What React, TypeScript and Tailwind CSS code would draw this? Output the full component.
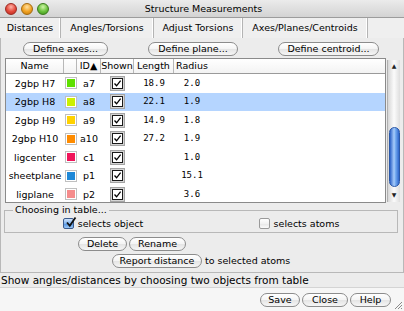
import React from 'react';

const rows = [
  { name: '2gbp H7', color: '#5fe000', id: 'a7', length: '18.9', radius: '2.0' },
  { name: '2gbp H8', color: '#ccf000', id: 'a8', length: '22.1', radius: '1.9', selected: true },
  { name: '2gbp H9', color: '#ffd200', id: 'a9', length: '14.9', radius: '1.8' },
  { name: '2gbp H10', color: '#ff8c00', id: 'a10', length: '27.2', radius: '1.9' },
  { name: 'ligcenter', color: '#f0145a', id: 'c1', length: '', radius: '1.0' },
  { name: 'sheetplane', color: '#1e88d8', id: 'p1', length: '', radius: '15.1' },
  { name: 'ligplane', color: '#f58c8c', id: 'p2', length: '', radius: '3.6' },
];

const tabs = [
  { label: 'Distances', w: 'w-[61px]' },
  { label: 'Angles/Torsions', w: 'w-[93px]' },
  { label: 'Adjust Torsions', w: 'w-[89px]' },
  { label: 'Axes/Planes/Centroids', w: 'w-[125px]' },
];

function Pill({ label, w }: { label: string; w: string }) {
  return (
    <div
      className={`${w} h-[14px] rounded-full border border-[#8c8c8c] bg-[linear-gradient(to_bottom,#ffffff,#f4f4f4_50%,#e4e4e4_51%,#f6f6f6)] flex items-center justify-center text-[9.5px] leading-none text-black shrink-0`}
    >
      {label}
    </div>
  );
}

function TableCheck() {
  return (
    <div className="w-[15px] h-[15px] bg-[#d4d4d4] border border-[#a4a4a4] flex items-center justify-center">
      <div className="w-[11px] h-[11px] bg-white border border-[#1a1a1a] flex items-center justify-center">
        <svg width="9" height="9" viewBox="0 0 9 9">
          <path d="M1.5 4.5 L3.6 6.8 L7.6 1.6" fill="none" stroke="#000" strokeWidth="1.3" />
        </svg>
      </div>
    </div>
  );
}

function AquaCheck({ checked }: { checked: boolean }) {
  return checked ? (
    <div className="w-[11px] h-[11px] rounded-[2px] border border-[#3b5a8c] bg-[linear-gradient(to_bottom,#cfe3fb,#7fb2ee_50%,#4d8fe0_51%,#9cc8f6)] flex items-center justify-center relative">
      <svg width="12" height="12" viewBox="0 0 12 12" className="absolute -top-[3px] left-[1px]">
        <path d="M2 6.5 L4.8 9.8 L10.5 1.5" fill="none" stroke="#111" strokeWidth="1.8" />
      </svg>
    </div>
  ) : (
    <div className="w-[11px] h-[11px] rounded-[2px] border border-[#9a9a9a] bg-[linear-gradient(to_bottom,#ffffff,#f2f2f2_50%,#e6e6e6_51%,#fafafa)]" />
  );
}

export default function App() {
  return (
    <div className="w-[404px] h-[311px] bg-[#ececec] flex flex-col overflow-hidden text-black relative font-['DejaVu_Sans',sans-serif]">
      {/* title bar */}
      <div className="h-[18px] shrink-0 flex items-center relative bg-[linear-gradient(to_bottom,#ebebeb,#d3d3d3)] border-b border-[#9c9c9c]">
        <div className="flex gap-[4px] pl-[5px]">
          <div className="w-[12px] h-[12px] rounded-full border border-[#9b2a22] bg-[radial-gradient(circle_at_50%_30%,#ffb3a8,#e2483a_55%,#b82a20)]" />
          <div className="w-[12px] h-[12px] rounded-full border border-[#a46a10] bg-[radial-gradient(circle_at_50%_30%,#ffe0a0,#f0a020_55%,#c07a10)]" />
          <div className="w-[12px] h-[12px] rounded-full border border-[#3c7a1c] bg-[radial-gradient(circle_at_50%_30%,#d0f5a8,#68c03a_55%,#3e8f20)]" />
        </div>
        <div className="flex-1 text-center text-[9.5px] leading-none pr-[50px] pl-[4px]">Structure Measurements</div>
      </div>

      {/* tabs */}
      <div className="h-[20px] shrink-0 flex bg-[#efefef]">
        {tabs.map((t) => (
          <div
            key={t.label}
            className={`${t.w} h-full flex items-center justify-center text-[9.5px] leading-none border-r border-[#b4b4b4] shadow-[inset_-1px_0_0_#fff]`}
          >
            {t.label}
          </div>
        ))}
      </div>

      {/* panel */}
      <div className="h-[235px] shrink-0 border-x border-b border-[#b8b8b8] flex flex-col">
        <div className="pt-[4px] pl-[22px] flex gap-[40px]">
          <Pill label="Define axes..." w="w-[85px]" />
          <Pill label="Define plane..." w="w-[90px]" />
          <Pill label="Define centroid..." w="w-[101px]" />
        </div>

        <div className="mt-[2px] h-[145px] flex pl-[4px]">
          <div className="w-[381px] h-full border border-[#8a8a8a] bg-white overflow-hidden shadow-[inset_1px_1px_0_#c4c4c4]">
            <div className="h-[15px] flex text-[9.5px] leading-none bg-[linear-gradient(to_bottom,#ffffff,#f3f3f3)] border-b border-[#9a9a9a]">
              <div className="w-[58px] flex items-center justify-center border-r border-[#b8b8b8]">Name</div>
              <div className="w-[13px] border-r border-[#b8b8b8]" />
              <div className="w-[24px] flex items-center justify-center border-r border-[#b8b8b8]">ID▲</div>
              <div className="w-[33px] flex items-center justify-center border-r border-[#b8b8b8]">Shown</div>
              <div className="w-[40px] flex items-center justify-center border-r border-[#b8b8b8]">Length</div>
              <div className="w-[36px] flex items-center justify-center">Radius</div>
              <div className="flex-1" />
            </div>
            {rows.map((r) => (
              <div
                key={r.id}
                className={`h-[18.5px] flex items-center text-[9.5px] leading-none ${r.selected ? 'bg-[#b5d5ff]' : 'bg-white'}`}
              >
                <div className="w-[58px] text-center whitespace-nowrap">{r.name}</div>
                <div className="w-[13px] flex justify-center">
                  <div className="w-[12px] h-[12px] bg-white border border-[#c0c0c0] flex items-center justify-center">
                    <div className="w-[8px] h-[8px]" style={{ backgroundColor: r.color }} />
                  </div>
                </div>
                <div className="w-[24px] text-center">{r.id}</div>
                <div className="w-[33px] flex justify-center">
                  <TableCheck />
                </div>
                <div className="w-[40px] text-center font-['DejaVu_Sans_Mono',monospace] text-[9px]">{r.length}</div>
                <div className="w-[36px] text-center font-['DejaVu_Sans_Mono',monospace] text-[9px]">{r.radius}</div>
              </div>
            ))}
          </div>

          {/* scrollbar */}
          <div className="ml-[1px] mt-[2px] w-[13px] h-[142px] flex flex-col items-center bg-[linear-gradient(to_right,#d6d6d6,#fbfbfb_50%,#dedede)] border-l border-[#b0b0b0]">
            <div className="h-[12px] w-full flex items-center justify-center text-[6px] leading-none text-[#222]">▲</div>
            <div className="h-[55px]" />
            <div className="w-[11px] h-[60px] rounded-full border border-[#2a58a8] bg-[linear-gradient(to_right,#2c62c8,#a9cdfa_45%,#78aef2_60%,#2e66cc)]" />
            <div className="flex-1 w-full flex items-center justify-center text-[6px] leading-none text-[#222]">▼</div>
          </div>
        </div>

        <fieldset className="mt-[1px] mx-[3px] w-[394px] border border-[#b8b8b8] px-0 pb-0">
          <legend className="ml-[8px] px-[2px] text-[9.5px] leading-[12px]">Choosing in table...</legend>
          <div className="h-[17px] flex -mt-[1px]">
            <div className="flex-1 flex items-center justify-center gap-[4px] text-[9.5px] leading-none">
              <AquaCheck checked />
              <span>selects object</span>
            </div>
            <div className="flex-1 flex items-center justify-center gap-[4px] text-[9.5px] leading-none">
              <AquaCheck checked={false} />
              <span>selects atoms</span>
            </div>
          </div>
        </fieldset>

        <div className="mt-[4px] pl-[77px] flex gap-[2px]">
          <Pill label="Delete" w="w-[49px]" />
          <Pill label="Rename" w="w-[57px]" />
        </div>
        <div className="mt-[3px] pl-[111px] flex items-center gap-[3px]">
          <Pill label="Report distance" w="w-[90px]" />
          <span className="text-[9.5px] leading-none">to selected atoms</span>
        </div>
      </div>

      {/* status */}
      <div className="h-[15px] shrink-0 flex items-center pl-px text-[10.5px] leading-none border-b border-[#d4d4d4]">
        Show angles/distances by choosing two objects from table
      </div>

      {/* bottom buttons */}
      <div className="flex-1 bg-[#f6f6f6] flex justify-end pr-[13px] pt-[5px] gap-[2px]">
        <Pill label="Save" w="w-[40px]" />
        <Pill label="Close" w="w-[46px]" />
        <Pill label="Help" w="w-[41px]" />
      </div>

      <svg width="10" height="10" viewBox="0 0 10 10" className="absolute right-[1px] bottom-[1px]">
        <path d="M9 2 L2 9 M9 5 L5 9 M9 8 L8 9" stroke="#8a8a8a" strokeWidth="1" />
      </svg>
    </div>
  );
}
